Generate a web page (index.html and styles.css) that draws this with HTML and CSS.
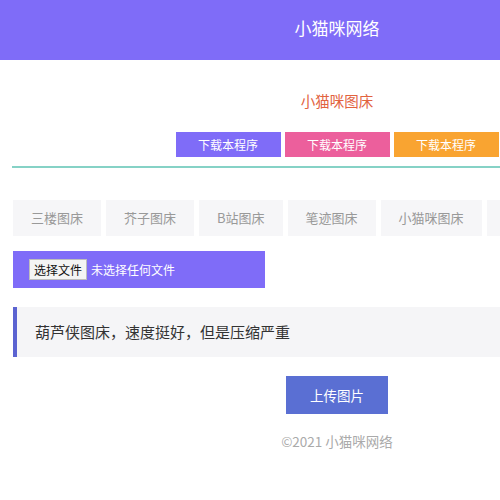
FILE: index.html
```html
<!DOCTYPE html>
<html lang="zh-CN">
<head>
<meta charset="utf-8">
<title>小猫咪图床</title>
<link rel="stylesheet" href="styles.css">
</head>
<body>
<div class="page">
  <header class="header">小猫咪网络</header>
  <main class="content">
    <h1 class="title">小猫咪图床</h1>
    <div class="downloads">
      <a class="dl dl-purple">下载本程序</a>
      <a class="dl dl-pink">下载本程序</a>
      <a class="dl dl-orange">下载本程序</a>
    </div>
    <div class="rule"></div>
    <nav class="tabs">
      <span class="tab">三楼图床</span>
      <span class="tab">芥子图床</span>
      <span class="tab">B站图床</span>
      <span class="tab">笔迹图床</span>
      <span class="tab">小猫咪图床</span>
      <span class="tab">葫芦侠图床</span>
    </nav>
    <label class="filebar">
      <span class="filebtn">选择文件</span>
      <span class="filename">未选择任何文件</span>
    </label>
    <div class="note">葫芦侠图床，速度挺好，但是压缩严重</div>
    <div class="upload-row"><button class="upload">上传图片</button></div>
    <footer class="footer">©2021 小猫咪网络</footer>
  </main>
</div>
</body>
</html>
```
FILE: styles.css
```css
html, body {
  margin: 0;
  padding: 0;
  background: #fff;
  overflow: hidden;
}
body {
  font-family: "Noto Sans CJK SC", "Noto Sans", sans-serif;
}
.page {
  width: 674px;
}
.header {
  height: 60px;
  background: #7f6cf8;
  color: #fff;
  font-size: 17px;
  line-height: 55px;
  text-align: center;
}
.content {
  padding: 0 12px;
}
.title {
  margin: 0;
  padding-top: 30px;
  height: 42px;
  line-height: 22px;
  font-size: 14.5px;
  font-weight: normal;
  color: #e2633f;
  text-align: center;
}
.downloads {
  display: flex;
  justify-content: center;
  gap: 4px;
}
.dl {
  width: 105px;
  height: 25px;
  line-height: 25px;
  text-align: center;
  color: #fff;
  font-size: 12px;
}
.dl-purple { background: #7f6cf8; }
.dl-pink { background: #ec5f9c; }
.dl-orange { background: #f9a431; }
.rule {
  margin-top: 9px;
  height: 2px;
  background: #86d2c6;
}
.tabs {
  display: flex;
  gap: 5px;
  margin-top: 32px;
  padding-left: 1px;
  white-space: nowrap;
}
.tab {
  flex: none;
  height: 36px;
  line-height: 36px;
  padding: 0 18px;
  background: #f6f6f8;
  color: #999;
  font-size: 13px;
}
.filebar {
  display: flex;
  align-items: center;
  margin: 15px 0 0 1px;
  width: 252px;
  height: 37px;
  background: #7f6cf8;
  padding-left: 16px;
  box-sizing: border-box;
}
.filebtn {
  height: 19px;
  line-height: 19px;
  padding: 0 4px;
  background: #f4f4f4;
  border: 1px solid #bdbdbd;
  color: #111;
  font-size: 12px;
}
.filename {
  margin-left: 4px;
  color: #fff;
  font-size: 12px;
}
.note {
  margin: 19px 0 0 1px;
  height: 50px;
  line-height: 50px;
  background: #f5f5f7;
  border-left: 4px solid #5b63d1;
  padding-left: 18px;
  color: #333;
  font-size: 15px;
}
.upload-row {
  display: flex;
  justify-content: center;
  margin-top: 19px;
}
.upload {
  width: 102px;
  height: 38px;
  border: 0;
  background: #5a6fd3;
  color: #fff;
  font-family: inherit;
  font-size: 13.5px;
  padding: 0;
}
.footer {
  margin-top: 16px;
  text-align: center;
  color: #aaa;
  font-size: 13.5px;
  line-height: 22px;
}
```
